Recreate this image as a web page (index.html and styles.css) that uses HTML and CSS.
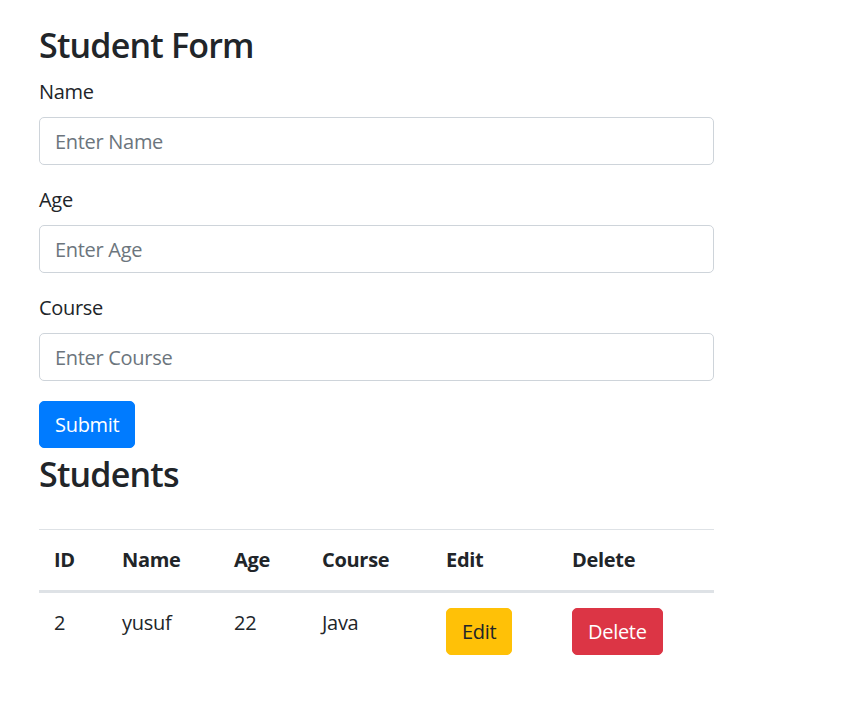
FILE: index.html
```html
<!DOCTYPE html>
<html>
<head>
<meta charset="utf-8">
<title>Student Form</title>
<link rel="stylesheet" href="styles.css">
</head>
<body>
<div class="page">
  <h2 class="title">Student Form</h2>
  <form class="form">
    <div class="form-group">
      <label class="label">Name</label>
      <input class="input" type="text" placeholder="Enter Name">
    </div>
    <div class="form-group">
      <label class="label">Age</label>
      <input class="input" type="text" placeholder="Enter Age">
    </div>
    <div class="form-group">
      <label class="label">Course</label>
      <input class="input" type="text" placeholder="Enter Course">
    </div>
    <button type="button" class="btn btn-primary">Submit</button>
  </form>
  <h2 class="title">Students</h2>
  <table class="table">
    <thead>
      <tr>
        <th class="c-id">ID</th>
        <th class="c-name">Name</th>
        <th class="c-age">Age</th>
        <th class="c-course">Course</th>
        <th class="c-edit">Edit</th>
        <th class="c-del">Delete</th>
      </tr>
    </thead>
    <tbody>
      <tr>
        <td>2</td>
        <td>yusuf</td>
        <td>22</td>
        <td>Java</td>
        <td><button type="button" class="btn btn-warning">Edit</button></td>
        <td><button type="button" class="btn btn-danger">Delete</button></td>
      </tr>
    </tbody>
  </table>
</div>
</body>
</html>
```
FILE: styles.css
```css
* { box-sizing: border-box; }
html, body {
  margin: 0;
  background: #fff;
}
body {
  font-family: "Open Sans", "Noto Sans", sans-serif;
  font-size: 20px;
  line-height: 1.5;
  letter-spacing: -0.3px;
  color: #212529;
}
.page {
  width: 714px;
  padding: 19px 0 40px 39px;
}
.title {
  margin: 0 0 6px;
  height: 52px;
  font-size: 34px;
  font-weight: 600;
  line-height: 52px;
  letter-spacing: -0.8px;
}
.form-group {
  margin-bottom: 20px;
}
.label {
  display: block;
  margin-bottom: 10px;
}
.input {
  display: block;
  width: 100%;
  height: 48px;
  padding: 7px 15px;
  font: inherit;
  letter-spacing: inherit;
  color: #495057;
  background: #fff;
  border: 1px solid #ced4da;
  border-radius: 5px;
}
.input::placeholder {
  color: #6c757d;
}
.btn {
  display: inline-block;
  font: inherit;
  letter-spacing: inherit;
  line-height: 1.5;
  padding: 7px 15px;
  height: 47px;
  border: 1px solid transparent;
  border-radius: 5px;
  cursor: pointer;
}
.btn-primary { background: #007bff; border-color: #007bff; color: #fff; }
.btn-warning { background: #ffc107; border-color: #ffc107; color: #212529; }
.btn-danger { background: #dc3545; border-color: #dc3545; color: #fff; }
.table {
  width: 100%;
  margin-top: 29px;
  border-collapse: collapse;
}
.table th, .table td {
  text-align: left;
  vertical-align: top;
  padding: 15px;
  border-top: 1px solid #dee2e6;
}
.table th {
  font-weight: 700;
}
.table thead th {
  border-bottom: 3px solid #dee2e6;
}
.c-id { width: 68px; }
.c-name { width: 112px; }
.c-age { width: 88px; }
.c-course { width: 124px; }
.c-edit { width: 126px; }
.c-del { width: 157px; }
```
